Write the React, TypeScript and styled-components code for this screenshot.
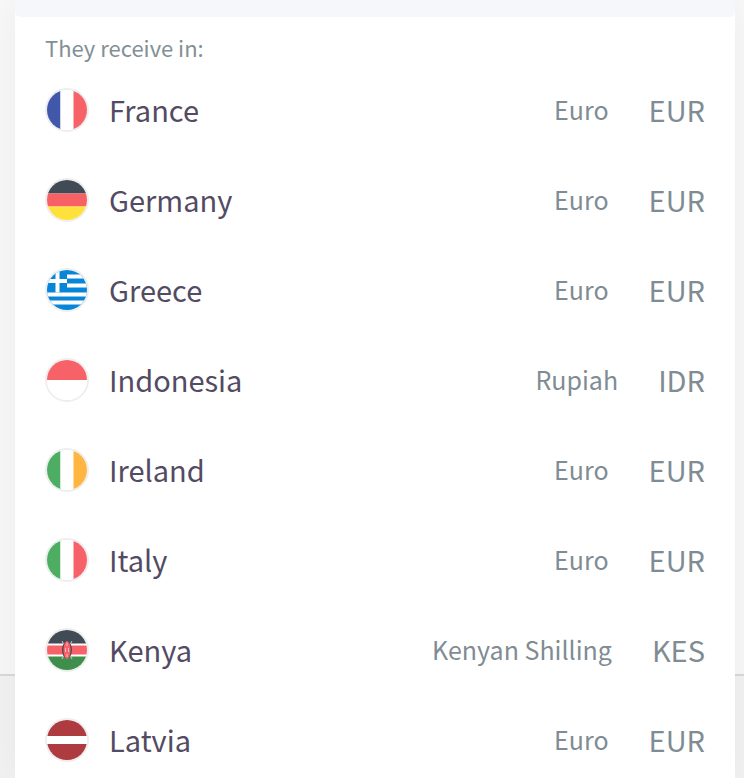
import React from "react";
import styled, { createGlobalStyle } from "styled-components";

const GlobalStyle = createGlobalStyle`
  *, *::before, *::after { box-sizing: border-box; }
  body {
    margin: 0;
    background: #f3f3f3;
    font-family: "Noto Sans CJK SC", "Open Sans", sans-serif;
  }
`;

const Page = styled.div`
  display: grid;
  grid-template-columns: minmax(0, 1fr);
  min-height: 100vh;
  overflow: hidden;
`;

const Backdrop = styled.div`
  grid-area: 1 / 1;
  display: flex;
  flex-direction: column;
  background: #f2f2f2;
`;

const BackdropTop = styled.div`
  flex: 0 0 676px;
  background: #f8f8f8;
  border-bottom: 2px solid #d9d9d9;
`;

const Panel = styled.main`
  grid-area: 1 / 1;
  margin: 0 9px 0 15px;
  background: #ffffff;
  box-shadow: 0 0 40px rgba(0, 0, 0, 0.05);
`;

const SearchStrip = styled.div`
  height: 17px;
  background: #f5f7fa;
  border-radius: 0 0 5px 5px;
`;

const Heading = styled.h2`
  margin: 0;
  padding: 14px 30px 0;
  height: 48px;
  color: #829096;
  font-size: 22px;
  font-weight: 400;
  line-height: 32px;
`;

const CountryList = styled.ul`
  margin: 0;
  padding: 0;
  list-style: none;
`;

const CountryButton = styled.button`
  display: flex;
  align-items: center;
  width: 100%;
  height: 90px;
  padding: 0 30px;
  border: 0;
  background: transparent;
  color: #7f8c94;
  font-family: inherit;
  font-size: 29px;
  line-height: 44px;
  text-align: left;
  cursor: pointer;
`;

const FlagCircle = styled.span`
  flex: none;
  width: 44px;
  height: 44px;
  border: 2px solid #eeeeee;
  border-radius: 50%;
  overflow: hidden;

  svg { display: block; width: 40px; height: 40px; }
`;

const CountryName = styled.span`
  flex: 1;
  padding: 0 0 2px 20px;
  color: #534a63;
`;

const CurrencyName = styled.span`
  padding: 0 40px 2px 0;
  font-size: 25px;
`;

const CurrencyCode = styled.span`
  padding-bottom: 2px;
`;

type Stripe = { color: string; size: number };

function Stripes({ stripes, vertical = false }: { stripes: Stripe[]; vertical?: boolean }) {
  let start = 0;
  return (
    <>
      {stripes.map(({ color, size }, i) => {
        const at = start;
        start += size;
        return vertical ? (
          <rect key={i} x={at} width={size} height="40" fill={color} />
        ) : (
          <rect key={i} y={at} width="40" height={size} fill={color} />
        );
      })}
    </>
  );
}

const tricolor = (a: string, b: string, c: string): Stripe[] => [
  { color: a, size: 13.5 },
  { color: b, size: 13 },
  { color: c, size: 13.5 },
];

const flags: Record<string, React.ReactNode> = {
  France: <Stripes vertical stripes={tricolor("#4157a9", "#ffffff", "#f76268")} />,
  Germany: <Stripes stripes={tricolor("#414b56", "#f66166", "#ffe13b")} />,
  Greece: (
    <>
      <rect width="40" height="40" fill="#0786d9" />
      <path d="M20 6.5h20M20 15.5h20M0 24.5h40M0 32.5h40" stroke="#ffffff" strokeWidth="4" />
      <path d="M0 11h20M10.5 0v22.5" stroke="#ffffff" strokeWidth="4" />
    </>
  ),
  Indonesia: (
    <Stripes stripes={[{ color: "#f76168", size: 20 }, { color: "#ffffff", size: 20 }]} />
  ),
  Ireland: <Stripes vertical stripes={tricolor("#4dad62", "#ffffff", "#ffb541")} />,
  Italy: <Stripes vertical stripes={tricolor("#4dad62", "#ffffff", "#f76268")} />,
  Kenya: (
    <>
      <rect width="40" height="40" fill="#ffffff" />
      <rect width="40" height="13.5" fill="#414b56" />
      <rect y="15.5" width="40" height="9" fill="#f76268" />
      <rect y="26.5" width="40" height="13.5" fill="#3f8f4c" />
      <path d="M15 11l10 18M25 11L15 29" stroke="#c8cccf" strokeWidth="1" />
      <ellipse cx="20" cy="20" rx="5" ry="8.5" fill="#5b4650" />
      <ellipse cx="20" cy="20" rx="3.5" ry="9" fill="#f76268" />
      <path d="M20 13v3M20 24v3M18.5 18v4M21.5 18v4" stroke="#ffb9bd" strokeWidth="1" />
    </>
  ),
  Latvia: (
    <Stripes
      stripes={[
        { color: "#ad3b40", size: 16 },
        { color: "#ffffff", size: 8 },
        { color: "#ad3b40", size: 16 },
      ]}
    />
  ),
};

const countries = [
  { name: "France", currency: "Euro", code: "EUR" },
  { name: "Germany", currency: "Euro", code: "EUR" },
  { name: "Greece", currency: "Euro", code: "EUR" },
  { name: "Indonesia", currency: "Rupiah", code: "IDR" },
  { name: "Ireland", currency: "Euro", code: "EUR" },
  { name: "Italy", currency: "Euro", code: "EUR" },
  { name: "Kenya", currency: "Kenyan Shilling", code: "KES" },
  { name: "Latvia", currency: "Euro", code: "EUR" },
];

export default function App() {
  return (
    <Page>
      <GlobalStyle />
      <Backdrop>
        <BackdropTop />
      </Backdrop>
      <Panel>
        <SearchStrip />
        <Heading>They receive in:</Heading>
        <CountryList>
          {countries.map(({ name, currency, code }) => (
            <li key={name}>
              <CountryButton type="button">
                <FlagCircle>
                  <svg viewBox="0 0 40 40" aria-hidden="true">
                    {flags[name]}
                  </svg>
                </FlagCircle>
                <CountryName>{name}</CountryName>
                <CurrencyName>{currency}</CurrencyName>
                <CurrencyCode>{code}</CurrencyCode>
              </CountryButton>
            </li>
          ))}
        </CountryList>
      </Panel>
    </Page>
  );
}
